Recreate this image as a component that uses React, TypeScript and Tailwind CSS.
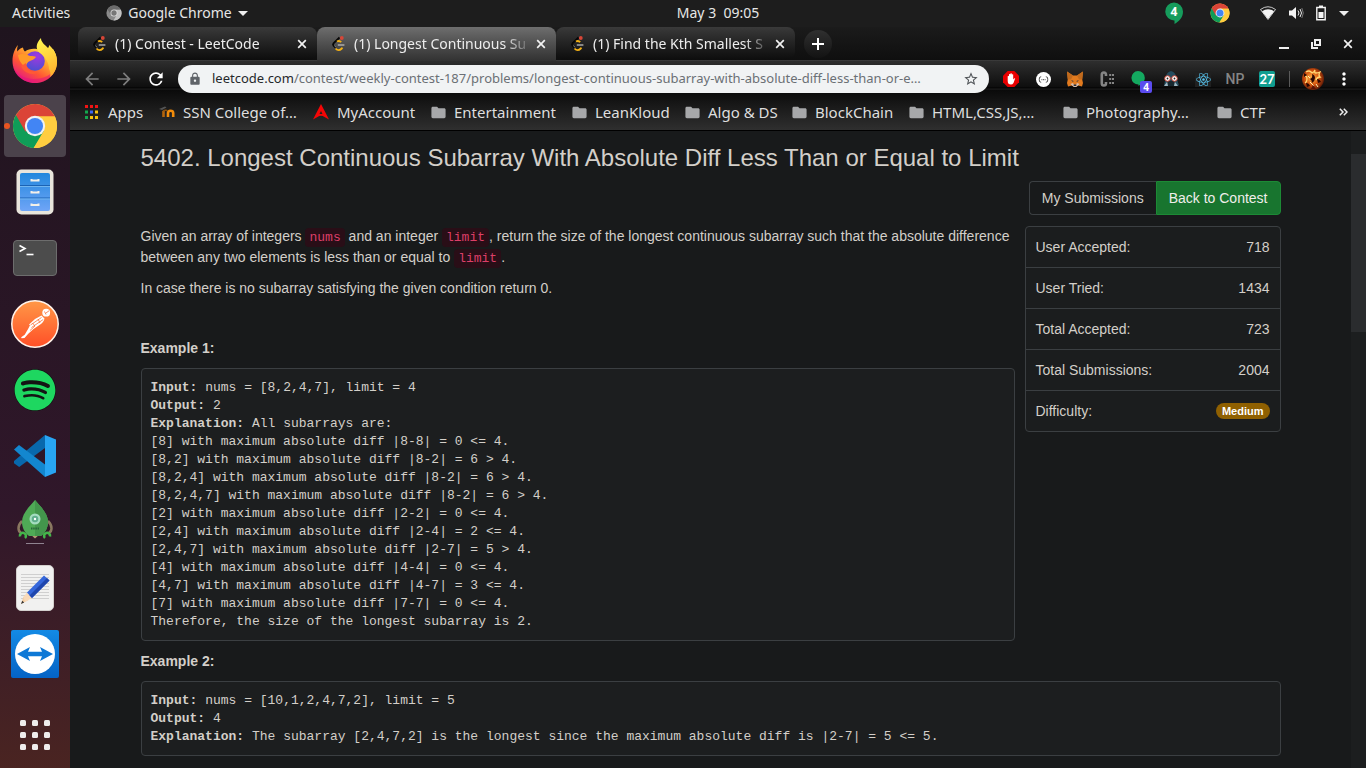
import React, { type ReactNode } from "react";
import { FaReact, FaSpotify } from "react-icons/fa";
import { MdArrowBack, MdArrowForward, MdFolder, MdLock, MdMoreVert, MdRefresh, MdStarBorder } from "react-icons/md";

function ChromeLogo({ className }: { className: string }) {
  return (
    <svg viewBox="0 0 48 48" className={className} aria-hidden="true">
      <circle cx="24" cy="24" r="23" fill="#ffcd40" />
      <path d="M24 24 L4.1 12.5 A23 23 0 0 0 22.6 46.95 L34.4 29.5 Z" fill="#0f9d58" />
      <path d="M4.1 12.5 A23 23 0 0 1 44.7 14 L24 14 L14 30 Z" fill="#db4437" />
      <path d="M44.7 14 A23 23 0 0 1 22.6 47 L33.5 28.5 L24 14 Z" fill="#ffcd40" />
      <circle cx="24" cy="24" r="10.6" fill="#f1f1f1" />
      <circle cx="24" cy="24" r="8.4" fill="#4285f4" />
    </svg>
  );
}

function GreyChrome() {
  return (
    <svg viewBox="0 0 16 16" className="size-4" aria-hidden="true">
      <circle cx="8" cy="8" r="7.6" fill="#8a8a8a" />
      <path d="M1.4 4.3A7.6 7.6 0 0 1 14.9 4.8L8 4.8 4.8 9.6z" fill="#6b6b6b" />
      <path d="M14.9 4.8A7.6 7.6 0 0 1 7.5 15.6L11 9.6 9 4.8z" fill="#c2c2c2" />
      <circle cx="8" cy="8" r="3.5" fill="#e0e0e0" />
      <circle cx="8" cy="8" r="2.7" fill="#777" />
    </svg>
  );
}

function Firefox() {
  return (
    <svg viewBox="0 0 46 48" className="h-12 w-[46px]" aria-hidden="true">
      <defs>
        <linearGradient id="ffBody" x1="0.85" y1="0.1" x2="0.2" y2="0.95">
          <stop offset="0" stopColor="#fff44f" />
          <stop offset="0.35" stopColor="#ffa42e" />
          <stop offset="0.65" stopColor="#ff5634" />
          <stop offset="1" stopColor="#e31587" />
        </linearGradient>
        <radialGradient id="ffGlobe" cx="0.6" cy="0.25" r="0.8">
          <stop offset="0" stopColor="#a238e0" />
          <stop offset="1" stopColor="#4a4fd0" />
        </radialGradient>
        <linearGradient id="ffTail" x1="0.3" y1="0" x2="0.6" y2="1">
          <stop offset="0" stopColor="#fff44f" />
          <stop offset="1" stopColor="#ffb02e" />
        </linearGradient>
      </defs>
      <path d="M6 9C5 12 5 13 5.3 15.5 7 13 9 12 11 11.5c.2 1.5.8 3 2 4C17 12 24 12 28 14l13-1c2 3 4 7 4 12.500C45 37 35.500 47 23 47S.5 37.500.5 25C.5 19 2.500 13 6 9z" fill="url(#ffBody)" />
      <path d="M1 30C4 38 12 43 22 43s18-4 22-12C42 41 33.500 47 23 47S3 40 1 30z" fill="#e6127d" opacity=".55" />
      <circle cx="23" cy="25" r="9.800" fill="url(#ffGlobe)" />
      <path d="M29 2c0 4 3 6 7 10 1-1 1-2 1-3 6 5 8 11 8 17 0 7-3 12-7 15 1-4 0-6-1-8 0-7-4-12-9-16-5-4-4-10 1-15z" fill="url(#ffTail)" />
      <path d="M6 19c4-2 8-1 12 1 3 0 5 0 6 1-1 2-4 3-6 4-3 1-4 4-4 6-4-2-7-6-8-12z" fill="#ff9a28" />
      <path d="M14 27c0 7 6 10 13 9-5 4-15 2-18-6z" fill="#ff5a36" />
    </svg>
  );
}

function Files() {
  return (
    <svg viewBox="0 0 38 46" className="h-[46px] w-[38px]" aria-hidden="true">
      <defs>
        <linearGradient id="drawer" x1="0" y1="0" x2="0" y2="1">
          <stop offset="0" stopColor="#2287dd" />
          <stop offset="1" stopColor="#6fa5f7" />
        </linearGradient>
      </defs>
      <rect x=".5" y=".5" width="37" height="45" rx="5" fill="#e9e5dc" />
      <rect x="4" y="4" width="30" height="38" rx="2" fill="url(#drawer)" />
      <path d="M4 16.500h30M4 29h30" stroke="#1b63b4" />
      <path d="M4 17.500h30M4 30h30" stroke="#71b5ef" />
      <path d="M15.500 10v1.500h7V10M15.500 22v1.500h7V22M15.500 34.500V36h7v-1.500" fill="none" stroke="#f3f0e9" strokeWidth="2" />
    </svg>
  );
}

function Terminal() {
  return (
    <svg viewBox="0 0 44 36" className="h-9 w-11" aria-hidden="true">
      <rect x=".5" y=".5" width="43" height="35" rx="3.500" fill="#4c4c4c" stroke="#6d6d6d" />
      <path d="M6.500 5.500l5.500 3-5.500 3" fill="none" stroke="#fff" strokeWidth="1.600" />
      <path d="M13.500 14.500h7" stroke="#fff" strokeWidth="1.600" />
    </svg>
  );
}

function Postman() {
  return (
    <svg viewBox="0 0 48 48" className="size-12" aria-hidden="true">
      <defs>
        <linearGradient id="pm" x1="0" y1="0" x2="0" y2="1">
          <stop offset="0" stopColor="#ff9847" />
          <stop offset="1" stopColor="#ff4f27" />
        </linearGradient>
      </defs>
      <circle cx="24" cy="24" r="23.200" fill="url(#pm)" stroke="#fff3ea" strokeWidth="1.500" />
      <circle cx="35.200" cy="12.700" r="3.900" fill="#fff" />
      <path d="M35 13l3-2.200M33.500 11.500l1.500 3" stroke="#f96a33" strokeWidth=".8" />
      <path d="M30.500 15.500l3 3c-.5 3-2.500 5-5 6.500l-6 4-5 4.500-4 4.500-3 .2-.3-1 3.500-2.500 3.500-6 1.800-3.500-1-.8 6-5.400z" fill="#fff" />
      <path d="M30.500 17.500L19.500 25M32.200 19.500L20.500 27.500M21.500 23l2.500 3-5 4.500M27 19l2 4" fill="none" stroke="#f9713a" strokeWidth=".8" />
    </svg>
  );
}

function Spotify() {
  return (
    <span className="flex size-[42px] items-center justify-center rounded-full bg-[#141414]">
      <FaSpotify className="size-[42px] text-[#1ed760]" />
    </span>
  );
}

function VsCode() {
  return (
    <svg viewBox="0 0 42 42" className="size-[42px]" aria-hidden="true">
      <path d="M31 0v13L5.200 32 0 28.300v-2.200z" fill="#0868ac" />
      <path d="M0 14.500L5 10l26 19.500V42z" fill="#1387cf" />
      <path d="M31 0l11 4.500v33L31 42z" fill="#28a5f3" />
    </svg>
  );
}

function Rocket() {
  return (
    <svg viewBox="0 0 36 46" className="h-[46px] w-9" aria-hidden="true">
      <path d="M5 22c-5 5-4 10-1 12M31 22c5 5 4 10 1 12" fill="none" stroke="#8a7860" strokeWidth="2.500" />
      <path d="M13 35h10l-5 4.500z" fill="#b49a72" />
      <path d="M18 1C25 9 31 15 31 23c0 6-3 11-7 14H12c-4-3-7-8-7-14C5 15 11 9 18 1z" fill="#4faa56" />
      <path d="M18 1C25 9 31 15 31 23c0 6-3 11-7 14h-6z" fill="#43964c" />
      <path d="M8 39a3 3 0 1 0-5-1.500M28 39a3 3 0 1 1 5-1.500" fill="none" stroke="#43b549" strokeWidth="2.600" />
      <circle cx="18" cy="20" r="5.500" fill="#a4dcc0" />
      <circle cx="18" cy="20" r="3.300" fill="#5fae8c" />
      <circle cx="18" cy="20" r="1.200" fill="#fff" />
      <path d="M14 29.500h8" stroke="#28673a" strokeWidth="2" strokeDasharray="1.500 .7" />
      <path d="M9 44.500h18" stroke="#8f8390" />
    </svg>
  );
}

function Editor() {
  return (
    <svg viewBox="0 0 38 46" className="h-[46px] w-[38px]" aria-hidden="true">
      <rect x=".5" y=".5" width="37" height="45" rx="4.500" fill="#f1f1f0" stroke="#d3d0cd" />
      <path d="M5 9.500h28M5 12.500h28M5 15.500h28M5 18.500h28M5 21.500h28M5 24.500h28M5 27.500h28M5 30.500h28M5 33.500h28" stroke="#cfcfcf" />
      <path d="M5 39l2.500-7.500 5 3.500z" fill="#f4cfa5" />
      <path d="M7.500 32L11 27.500l5 5.500-7 4z" fill="#f9dab9" />
      <path d="M5 39l1.200-3.300 2 1.800z" fill="#333" />
      <path d="M11 27.500L28 10.500l5.500 5L16 33z" fill="#3567db" />
      <path d="M13.500 30.500L31 13l2.500 2.500L16 33z" fill="#1f46ad" />
    </svg>
  );
}

function TeamViewer() {
  return (
    <svg viewBox="0 0 48 48" className="size-12" aria-hidden="true">
      <defs>
        <linearGradient id="tv" x1="0" y1="0" x2="0" y2="1">
          <stop offset="0" stopColor="#138ae5" />
          <stop offset="1" stopColor="#0563c5" />
        </linearGradient>
      </defs>
      <rect width="48" height="48" rx="2" fill="url(#tv)" />
      <circle cx="24" cy="24" r="20" fill="#fff" />
      <path d="M6 24l13-7-2 4.800h14L29 17l13 7-13 7 2-4.800H17l2 4.800z" fill="#0d78d6" />
    </svg>
  );
}

function AppsGrid() {
  return (
    <svg viewBox="0 0 30 30" className="size-[30px]" aria-hidden="true">
      {[0, 12, 24].map((y) => [0, 12, 24].map((x) => <rect key={`${x}-${y}`} x={x} y={y} width="6" height="6" rx="1.500" fill="#eeeceb" />))}
    </svg>
  );
}

function LeetIcon() {
  return (
    <svg viewBox="0 0 16 16" className="size-4 shrink-0" aria-hidden="true">
      <path d="M8.500 1.500L2.500 7.300q-1 1.200 0 2.400L5 12.200" fill="none" stroke="#070707" strokeWidth="1.800" />
      <path d="M3.500 9.500l1.500 2" stroke="#b5b5b5" strokeWidth=".7" />
      <path d="M6 5.600q2.300-1.500 4.200.6M4.500 12.500q3 3.200 6.300 0l.7-.8" fill="none" stroke="#f4b114" strokeWidth="1.800" />
      <path d="M6.800 9h6.600" stroke="#b3b3b3" strokeWidth="1.400" />
      <circle cx="10.800" cy="2" r="1.900" fill="#d84637" />
    </svg>
  );
}

function CloseMark() {
  return (
    <svg viewBox="0 0 10 10" className="size-[10px]" aria-hidden="true">
      <path d="M1.200 1.200l7.600 7.600M8.800 1.200L1.200 8.800" stroke="#f2f2f2" strokeWidth="1.700" />
    </svg>
  );
}

const dock: { name: string; icon: ReactNode; active?: boolean }[] = [
  { name: "Firefox", icon: <Firefox /> },
  { name: "Google Chrome", icon: <ChromeLogo className="size-[46px]" />, active: true },
  { name: "Files", icon: <Files /> },
  { name: "Terminal", icon: <Terminal /> },
  { name: "Postman", icon: <Postman /> },
  { name: "Spotify", icon: <Spotify /> },
  { name: "Visual Studio Code", icon: <VsCode /> },
  { name: "Robo 3T", icon: <Rocket /> },
  { name: "Text Editor", icon: <Editor /> },
  { name: "TeamViewer", icon: <TeamViewer /> },
];

function Dock() {
  return (
    <nav aria-label="Dock" className="flex w-[70px] shrink-0 flex-col items-center gap-1 bg-linear-to-b from-[#1f141e] via-[#30172a] via-65% to-[#4a2421] py-0.5">
      {dock.map((d) => (
        <button key={d.name} aria-label={d.name} className={`relative flex size-[62px] shrink-0 items-center justify-center rounded ${d.active ? "bg-[#4b424b]" : ""}`}>
          {d.active && <span className="absolute left-0 top-7 size-[6px] rounded-full bg-[#e95420]" />}
          {d.icon}
        </button>
      ))}
      <button aria-label="Show applications" className="mt-auto flex size-[62px] shrink-0 items-center justify-center">
        <AppsGrid />
      </button>
    </nav>
  );
}

function TopBar() {
  return (
    <header className="grid h-[27px] shrink-0 grid-cols-[1fr_auto_1fr] items-center bg-[#1d1d1d] px-3 pb-px text-sm text-[#e6e6e6]">
      <div className="flex items-center">
        <button>Activities</button>
        <button className="ml-9 flex items-center gap-1.5">
          <GreyChrome />
          Google Chrome
          <svg viewBox="0 0 10 5" className="h-[5px] w-[10px]" aria-hidden="true"><path d="M0 0h10L5 5z" fill="#eee" /></svg>
        </button>
      </div>
      <button className="whitespace-pre pl-[70px]">May 3  09:05</button>
      <div className="flex items-center justify-end pr-[5px]">
        <svg viewBox="0 0 20 22" className="mr-[26px] h-[22px] w-5" aria-label="4 messages">
          <path d="M10 .5a9 9 0 0 1 9 9c0 6-4 10-8.500 12.500V18.500A9 9 0 1 1 10 .5z" fill="#169c5c" />
          <text x="10" y="13.500" textAnchor="middle" fontSize="12" fontWeight="700" fill="#fff" fontFamily="Noto Sans, sans-serif">4</text>
        </svg>
        <ChromeLogo className="mr-[30px] size-5" />
        <svg viewBox="0 0 16 14" className="mr-3 h-[14px] w-4" aria-label="Wi-Fi">
          <path d="M.5 3.500Q8-2 15.500 3.500L8 13.500z" fill="none" stroke="#ddd" strokeWidth=".9" />
          <path d="M2 5.200Q8 1.500 14 5.200L8 13z" fill="#f4f4f4" />
        </svg>
        <svg viewBox="0 0 16 14" className="mr-3 h-[14px] w-4" aria-label="Volume">
          <path d="M1 4.500h3L8 1v12L4 9.500H1z" fill="#f4f4f4" />
          <path d="M10 4.500q2 2.500 0 5M12 3q3 4 0 8" fill="none" stroke="#eee" />
          <path d="M13.800 2q3 5 0 10" fill="none" stroke="#777" />
        </svg>
        <svg viewBox="0 0 10 16" className="mr-[13px] h-4 w-[10px]" aria-label="Battery">
          <path d="M3 1.200h4M.8 2.500h8.400v12.300H.8z" fill="none" stroke="#f4f4f4" strokeWidth="1.400" />
          <path d="M2.500 7h5v6h-5z" fill="#f4f4f4" />
        </svg>
        <svg viewBox="0 0 10 5" className="h-[5px] w-[10px]" aria-hidden="true"><path d="M0 0h10L5 5z" fill="#eee" /></svg>
      </div>
    </header>
  );
}

const tabs = [
  { title: "(1) Contest - LeetCode", active: false },
  { title: "(1) Longest Continuous Su", active: true },
  { title: "(1) Find the Kth Smallest S", active: false },
];

function TabStrip() {
  return (
    <div className="flex h-[33px] shrink-0 bg-linear-to-b from-[#1b1b1b] to-[#0f0f0f] pl-2 text-sm text-[#ededed]">
      {tabs.map((t) => (
        <div
          key={t.title}
          className={`flex w-[239px] min-w-0 items-center pl-[14px] pr-2.5 ${t.active ? "z-10 -mb-px rounded-t-lg bg-linear-to-b from-[#6e6e6e] to-[#323232] pb-px" : "rounded-lg bg-linear-to-b from-[#3a3a3a] to-[#0d0d0d]"}`}
        >
          <button className="flex min-w-0 flex-1 items-center gap-[7px] text-left">
            <LeetIcon />
            <span className="min-w-0 flex-1 overflow-hidden whitespace-nowrap [mask-image:linear-gradient(to_right,black_85%,transparent)]">{t.title}</span>
          </button>
          <button aria-label={`Close ${t.title}`} className="ml-1 flex size-[10px] items-center justify-center">
            <CloseMark />
          </button>
        </div>
      ))}
      <button aria-label="New tab" className="ml-[9px] mt-[3px] flex size-7 items-center justify-center rounded-full bg-linear-to-b from-[#303030] to-[#131313]">
        <svg viewBox="0 0 12 12" className="size-3" aria-hidden="true"><path d="M6 0v12M0 6h12" stroke="#fff" strokeWidth="2" /></svg>
      </button>
      <div className="ml-auto flex items-center gap-[22px] pr-[13px]">
        <button aria-label="Minimise"><svg viewBox="0 0 10 10" className="size-[10px]" aria-hidden="true"><path d="M0 9h10" stroke="#eee" strokeWidth="2" /></svg></button>
        <button aria-label="Restore">
          <svg viewBox="0 0 10 10" className="size-[10px]" aria-hidden="true">
            <path d="M4 1h5v5H4zM1 3v6h6" fill="none" stroke="#eee" strokeWidth="2" />
          </svg>
        </button>
        <button aria-label="Close window"><CloseMark /></button>
      </div>
    </div>
  );
}

const extensions: { name: string; icon: ReactNode }[] = [
  {
    name: "Ad blocker",
    icon: (
      <svg viewBox="0 0 16 16" className="size-4" aria-hidden="true">
        <path d="M4.700 0h6.600L16 4.700v6.600L11.300 16H4.700L0 11.300V4.700z" fill="#e80000" />
        <path d="M4.700 8V5.200q.7-.8 1.300 0V3.300q.7-.8 1.400 0V2.600q.7-.8 1.400 0v.9q.7-.7 1.400 0v5q1-1.500 2-1.200L10.500 12Q9.500 13.500 8 13.500 4.700 13.500 4.700 10z" fill="#fff" />
      </svg>
    ),
  },
  {
    name: "JSON viewer",
    icon: (
      <svg viewBox="0 0 16 16" className="size-[15px]" aria-hidden="true">
        <circle cx="8" cy="8" r="8" fill="#fff" />
        <path d="M5.500 5Q3 5 3.500 8 3 11 5.500 11M10.500 5Q13 5 12.500 8q.5 3-2 3" fill="none" stroke="#333" strokeWidth=".9" />
        <path d="M5.800 8.200h1M7.500 8.200h1M9.200 8.200h1" stroke="#333" />
      </svg>
    ),
  },
  {
    name: "MetaMask",
    icon: (
      <svg viewBox="0 0 16 16" className="size-4" aria-hidden="true">
        <path d="M0 .5l6 4h4l6-4-.8 8L16 12l-1 3.500-4-1-2 1.500H7l-2-1.500-4 1L0 12l.8-3.500z" fill="#e27a1e" />
        <path d="M0 .5l6 4-2 4H.8zM16 .5l-6 4 2 4h3.200z" fill="#c06a1d" />
        <path d="M3.500 13l2.500-1 1 2h2l1-2 2.500 1-1.500 1.500L9 16H7l-2-1.500z" fill="#d6bfb2" />
        <path d="M4 9l2.500 1-.5 1zM12 9l-2.500 1 .5 1zM6.700 13.500h2.600V15H6.700z" fill="#233447" />
      </svg>
    ),
  },
  {
    name: "Clist",
    icon: (
      <svg viewBox="0 0 16 16" className="size-4" aria-hidden="true">
        <path d="M7 5V3.800Q7 1.500 4.900 1.500T2.800 3.800v8.400q0 2.300 2.100 2.300T7 12.200V11" fill="none" stroke="#858585" strokeWidth="2.600" />
        <path d="M10.200 4h2M13 4h2M10.200 8h2M13 8h2M10.200 12h2M13 12h2" stroke="#858585" strokeWidth="2" />
      </svg>
    ),
  },
  {
    name: "Hangouts",
    icon: (
      <span className="relative flex size-4">
        <svg viewBox="0 0 16 16" className="size-4" aria-hidden="true"><path d="M7 0a6.800 6.800 0 0 1 6.800 7C13.800 11 10 13 7.500 15v-1.400A6.800 6.800 0 1 1 7 0z" fill="#14a960" /></svg>
        <span className="absolute left-[9px] top-[10px] flex h-3 w-3 items-center justify-center rounded-xs bg-[#5b4cf0] text-[10px] font-bold leading-none text-white">4</span>
      </span>
    ),
  },
  {
    name: "Reader",
    icon: (
      <svg viewBox="0 0 16 16" className="size-4" aria-hidden="true">
        <path d="M8 0q4 1 5 5l3 9.500H1L3 5Q4 1 8 0z" fill="#254c5e" />
        <path d="M1 15l3-4h8l3 4z" fill="#9db7c2" />
        <path d="M4 10h8l-1 5H5z" fill="#18282f" />
        <circle cx="4.500" cy="7.500" r="2.800" fill="#fff" stroke="#c4402f" strokeWidth="1" />
        <circle cx="11.500" cy="7.500" r="2.800" fill="#fff" stroke="#c4402f" strokeWidth="1" />
        <circle cx="4.500" cy="7.500" r=".9" fill="#222" />
        <circle cx="11.500" cy="7.500" r=".9" fill="#222" />
      </svg>
    ),
  },
  {
    name: "React Developer Tools",
    icon: <span className="flex size-4 items-center justify-center bg-[#202020]"><FaReact className="size-[15px] text-[#55bfe8]" /></span>,
  },
  { name: "NP", icon: <span className="font-[Roboto] text-sm font-medium text-[#858585]">NP</span> },
  {
    name: "27",
    icon: <span className="flex size-4 items-center justify-center rounded-xs bg-[#109d90] font-[Lato] text-[13px] font-bold leading-none text-white">27</span>,
  },
];

function Toolbar() {
  return (
    <div className="flex h-[38px] items-center pl-1.5 pr-[7px]">
      <button aria-label="Back" className="flex w-8 justify-center"><MdArrowBack className="size-5 text-[#7d7d7d]" /></button>
      <button aria-label="Forward" className="flex w-8 justify-center"><MdArrowForward className="size-5 text-[#7d7d7d]" /></button>
      <button aria-label="Reload" className="flex w-8 justify-center"><MdRefresh className="size-5 text-white" /></button>
      <div className="mx-1.5 flex h-7 min-w-0 flex-1 items-center rounded-full bg-[#f1f3f4] px-2.5 text-[13px]">
        <MdLock className="mr-2.5 size-[14px] shrink-0 text-[#5f6368]" />
        <label htmlFor="address" className="text-[#25282b]">leetcode.com</label>
        <input
          id="address"
          className="min-w-0 flex-1 truncate bg-transparent text-[#6b7075] outline-none"
          defaultValue="/contest/weekly-contest-187/problems/longest-continuous-subarray-with-absolute-diff-less-than-or-e…"
        />
        <button aria-label="Bookmark this page" className="ml-2"><MdStarBorder className="size-4 text-[#4f5357]" /></button>
      </div>
      {extensions.map((e) => (
        <button key={e.name} aria-label={e.name} className="flex w-8 shrink-0 items-center justify-center">{e.icon}</button>
      ))}
      <span className="mx-1.5 h-4 w-px bg-[#5a5a5a]" />
      <button aria-label="Profile" className="flex w-[33px] justify-center">
        <svg viewBox="0 0 22 22" className="size-[22px]" aria-hidden="true">
          <defs>
            <clipPath id="av"><circle cx="11" cy="11" r="11" /></clipPath>
            <radialGradient id="ember" cx=".45" cy=".45" r=".6">
              <stop offset="0" stopColor="#ffb545" />
              <stop offset=".55" stopColor="#d4520e" />
              <stop offset="1" stopColor="#4a1207" />
            </radialGradient>
          </defs>
          <g clipPath="url(#av)">
            <rect width="22" height="22" fill="url(#ember)" />
            <path d="M4 4q3-2 5 0t4-2q-1 3 1 3t4-1q-2 3 0 5-3 0-4 3M3 8q2 0 2 3t-2 4" fill="none" stroke="#ffd774" strokeWidth="1.300" />
            <path d="M10 6q3 1 3 4t-3 5q0-3-2-4 3-1 2-5zM15 11q3 0 4 3l-3 1zM4 15q3 0 4 3l-3 1zM2 5l3 2-3 2z" fill="#2a0703" />
            <path d="M8 14l4 4M14 16l2 3M6 8l2 2" stroke="#fff0b0" strokeWidth="1" />
            <path d="M11 17l3 4H9z" fill="#5a1206" />
          </g>
        </svg>
      </button>
      <button aria-label="Menu" className="flex w-[30px] justify-center"><MdMoreVert className="size-5 text-white" /></button>
    </div>
  );
}

const folder = <MdFolder className="size-[17px] text-[#a7a8aa]" />;

const bookmarks: { label: string; icon: ReactNode; width: string }[] = [
  {
    label: "Apps",
    width: "w-[75px]",
    icon: (
      <svg viewBox="0 0 14 14" className="size-[14px]" aria-hidden="true">
        <path d="M1 1.500h3M6 1.500h3M11 1.500h3" stroke="#f01414" strokeWidth="3" />
        <path d="M1 7h3M1 12.500h3" stroke="#14a84e" strokeWidth="3" />
        <path d="M6 7h3" stroke="#3c67f5" strokeWidth="3" />
        <path d="M11 7h3M6 12.500h3M11 12.500h3" stroke="#f7c20e" strokeWidth="3" />
      </svg>
    ),
  },
  {
    label: "SSN College of…",
    width: "w-[154px]",
    icon: (
      <svg viewBox="0 0 16 14" className="h-[14px] w-4" aria-hidden="true">
        <path d="M0 4l6-2.500 1.500 1L3 5z" fill="#555" />
        <path d="M4.500 12V6" stroke="#b5650c" strokeWidth="2.600" />
        <path d="M9 12V8q0-2.200 2.600-2.200T14.200 8v4" fill="none" stroke="#f28c0a" strokeWidth="2.600" />
        <path d="M4 6q3-1.500 4.500 0" fill="none" stroke="#8c520f" strokeWidth="1.500" />
      </svg>
    ),
  },
  {
    label: "MyAccount",
    width: "w-[117px]",
    icon: (
      <svg viewBox="0 0 16 16" className="size-4" aria-hidden="true"><path d="M8 0l8 15.500-4.500-2.500Q8 10.500 4.500 13L0 15.500zM8 7l-1.500 3h3z" fill="#f50606" fillRule="evenodd" /></svg>
    ),
  },
  { label: "Entertainment", width: "w-[141px]", icon: folder },
  { label: "LeanKloud", width: "w-[113px]", icon: folder },
  { label: "Algo & DS", width: "w-[107px]", icon: folder },
  { label: "BlockChain", width: "w-[117px]", icon: folder },
  { label: "HTML,CSS,JS,…", width: "w-[154px]", icon: folder },
  { label: "Photography…", width: "w-[154px]", icon: folder },
  { label: "CTF", width: "w-[75px]", icon: folder },
];

function Bookmarks() {
  return (
    <nav aria-label="Bookmarks" className="flex h-8 items-center pb-1 pl-[14px] pr-[18px] text-[15px] text-[#dedede]">
      {bookmarks.map((b) => (
        <button key={b.label} className={`flex shrink-0 items-center whitespace-nowrap text-left ${b.width}`}>
          <span className="flex w-6 shrink-0">{b.icon}</span>
          {b.label}
        </button>
      ))}
      <button aria-label="More bookmarks" className="ml-auto">
        <svg viewBox="0 0 9 8" className="h-2 w-[9px]" aria-hidden="true"><path d="M.8.8L4 4 .8 7.200M4.800.8L8 4 4.800 7.200" fill="none" stroke="#eee" strokeWidth="1.500" /></svg>
      </button>
    </nav>
  );
}

function Code({ children }: { children: string }) {
  return <code className="rounded bg-[#290e17] px-1 py-0.5 font-['Liberation_Mono',monospace] text-[13px] leading-none text-[#dc3f68]">{children}</code>;
}

function Sample({ input, output, explanation }: { input: string; output: string; explanation: string }) {
  return (
    <pre className="mt-[9px] overflow-hidden rounded border border-[#3b3f42] bg-[#1c1e1f] px-[9px] pb-[9px] pt-2.5 font-['Liberation_Mono',monospace] text-[13px] leading-[18px] text-[#d3cfc9]">
      <b>Input:</b> {input}{"\n"}
      <b>Output:</b> {output}{"\n"}
      <b>Explanation:</b> {explanation}
    </pre>
  );
}

const explanation = `All subarrays are: 
[8] with maximum absolute diff |8-8| = 0 <= 4.
[8,2] with maximum absolute diff |8-2| = 6 > 4. 
[8,2,4] with maximum absolute diff |8-2| = 6 > 4.
[8,2,4,7] with maximum absolute diff |8-2| = 6 > 4.
[2] with maximum absolute diff |2-2| = 0 <= 4.
[2,4] with maximum absolute diff |2-4| = 2 <= 4.
[2,4,7] with maximum absolute diff |2-7| = 5 > 4.
[4] with maximum absolute diff |4-4| = 0 <= 4.
[4,7] with maximum absolute diff |4-7| = 3 <= 4.
[7] with maximum absolute diff |7-7| = 0 <= 4. 
Therefore, the size of the longest subarray is 2.`;

const stats: [string, string][] = [
  ["User Accepted:", "718"],
  ["User Tried:", "1434"],
  ["Total Accepted:", "723"],
  ["Total Submissions:", "2004"],
];

function Problem() {
  return (
    <div className="flex min-h-0 flex-1 bg-[#181a1b] font-['Liberation_Sans',Arial,sans-serif] text-sm leading-[21px] text-[#d3cfc9]">
      <main className="min-w-0 flex-1 overflow-hidden">
        <div className="mx-auto max-w-[1170px] px-[15px] pt-[13px]">
          <h1 className="text-2xl leading-7">5402. Longest Continuous Subarray With Absolute Diff Less Than or Equal to Limit</h1>
          <div className="mt-[9px] flex justify-end">
            <a href="#submissions" className="flex h-[34px] items-center rounded-l border border-r-0 border-[#3b3f42] px-3">My Submissions</a>
            <a href="#contest" className="flex h-[34px] items-center rounded-r border border-[#1c8a35] bg-[#18752f] px-3 text-[#f0eeeb]">Back to Contest</a>
          </div>
          <div className="mt-[11px] flex items-start gap-2.5">
            <div className="min-w-0 flex-1">
              <p>
                Given an array of integers <Code>nums</Code> and an integer <Code>limit</Code>, return the size of the longest continuous subarray such that the absolute difference between any two elements is less than or equal to <Code>limit</Code>.
              </p>
              <p className="mt-2.5">In case there is no subarray satisfying the given condition return 0.</p>
              <p className="mt-[39px] font-bold">Example 1:</p>
              <Sample input="nums = [8,2,4,7], limit = 4" output="2 " explanation={explanation} />
            </div>
            <ul className="w-64 shrink-0 divide-y divide-[#3b3f42] rounded border border-[#3b3f42] bg-[#1b1d1e]">
              {stats.map(([k, v]) => (
                <li key={k} className="flex h-[41px] items-center justify-between px-2.5"><span>{k}</span><span>{v}</span></li>
              ))}
              <li className="flex h-10 items-center justify-between px-2.5">
                <span>Difficulty:</span>
                <span className="flex h-4 items-center rounded-full bg-[#8f6001] px-1.5 text-[11px] font-bold leading-none text-white">Medium</span>
              </li>
            </ul>
          </div>
          <p className="mt-[10px] font-bold">Example 2:</p>
          <Sample input="nums = [10,1,2,4,7,2], limit = 5" output="4 " explanation="The subarray [2,4,7,2] is the longest since the maximum absolute diff is |2-7| = 5 <= 5." />
        </div>
      </main>
      <div className="w-[15px] shrink-0 bg-[#1c1e1f] pt-[23px]" aria-hidden="true">
        <div className="h-[178px] bg-[#2a2c2e]" />
      </div>
    </div>
  );
}

export default function App() {
  return (
    <div className="flex h-screen flex-col overflow-hidden bg-[#1d1d1d] font-['Noto_Sans',sans-serif]">
      <TopBar />
      <div className="flex min-h-0 flex-1">
        <Dock />
        <div className="flex min-w-0 flex-1 flex-col">
          <TabStrip />
          <div className="shrink-0 border-b border-black bg-[linear-gradient(#454545_0px,#2e2e2e_1px,#0e0e0e_27px,#000_28px,#222_29px,#0a0a0a_30px,#2f2f2f_70px)]">
            <Toolbar />
            <Bookmarks />
          </div>
          <Problem />
        </div>
      </div>
    </div>
  );
}
